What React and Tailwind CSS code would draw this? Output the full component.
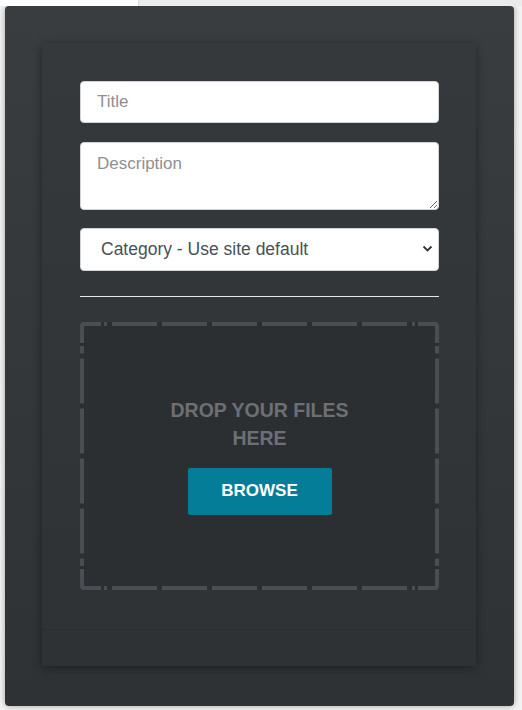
import { useState } from "react";

const W = 359;
const H = 268;

// dash pieces along one edge, centred, clipped short of the corners
function dashes(len) {
  const c = len / 2;
  const out = [];
  for (let k = 0; k < 10; k++) {
    const s = c + 2.5 + 50 * k;
    const e = s + 45;
    const cs = Math.max(s, 24);
    const ce = Math.min(e, len - 24);
    if (ce > cs) {
      out.push([cs, ce]);
      out.push([len - ce, len - cs]);
    }
  }
  return out;
}

function DashedFrame() {
  const corner = "M0 21V4a4 4 0 0 1 4-4h17v4H4v17z";
  return (
    <svg className="absolute inset-0 pointer-events-none" width={W} height={H} viewBox={`0 0 ${W} ${H}`}>
      <g fill="#494e52">
        {dashes(W).map(([s, e], i) => (
          <g key={"h" + i}>
            <rect x={s} y={0} width={e - s} height={4} />
            <rect x={s} y={H - 4} width={e - s} height={4} />
          </g>
        ))}
        {dashes(H).map(([s, e], i) => (
          <g key={"v" + i}>
            <rect x={0} y={s} width={4} height={e - s} />
            <rect x={W - 4} y={s} width={4} height={e - s} />
          </g>
        ))}
        <path d={corner} />
        <path d={corner} transform={`translate(${W} 0) scale(-1 1)`} />
        <path d={corner} transform={`translate(0 ${H}) scale(1 -1)`} />
        <path d={corner} transform={`translate(${W} ${H}) scale(-1 -1)`} />
      </g>
    </svg>
  );
}

export default function App() {
  const [category, setCategory] = useState("");

  return (
    <div className="min-h-screen bg-[#f3f3f3] font-['Liberation_Sans',Arial,sans-serif]">
      {/* strip of the page behind */}
      <div className="flex h-[6px]">
        <div className="w-[138px] bg-white" />
        <div className="flex-1 bg-[#ebebeb] border-l border-[#dcdcdc]" />
      </div>

      {/* modal */}
      <div className="ml-[5px] w-[509px] h-[700px] rounded-[4px] bg-gradient-to-b from-[#393d40] to-[#2f3235] shadow-[0_0_6px_rgba(0,0,0,0.35)] pt-[37px] pl-[37px]">
        <div className="w-[434px] h-[623px] rounded-[3px] bg-gradient-to-b from-[#35393c] to-[#2f3235] shadow-[0_2px_10px_rgba(0,0,0,0.4)] flex flex-col">
          <div className="h-[586px] pl-[38px] pr-[37px] pt-[38px] flex flex-col">
            <input
              type="text"
              placeholder="Title"
              className="h-[42px] w-full rounded-[4px] border border-[#ced4da] bg-white px-4 text-[17px] text-[#495057] placeholder:text-[#8f8f8f] outline-none"
            />
            <textarea
              placeholder="Description"
              className="mt-[19px] h-[68px] w-full rounded-[4px] border border-[#ced4da] bg-white px-4 pt-[8px] text-[17px] text-[#495057] placeholder:text-[#8f8f8f] outline-none"
            />
            <div className="relative mt-[18px]">
              <select
                value={category}
                onChange={(e) => setCategory(e.target.value)}
                className="h-[43px] w-full appearance-none rounded-[4px] border border-[#ced4da] bg-white pl-[20px] text-[17.5px] text-[#495057] outline-none"
              >
                <option value="">Category - Use site default</option>
                <option value="1">General</option>
              </select>
              <svg className="absolute right-[6px] top-[17px] pointer-events-none" width="11" height="8" viewBox="0 0 11 8">
                <path d="M1.5 1.5l4 4 4-4" fill="none" stroke="#333" strokeWidth="1.8" />
              </svg>
            </div>

            <div className="mt-[25px] h-px bg-[#e6e6e6]" />

            <div className="relative mt-[25px] h-[268px] w-[359px] rounded-[4px] bg-[#2c2f32] flex flex-col items-center justify-center">
              <DashedFrame />
              <p className="-mt-[2px] max-w-[200px] text-center text-[19.5px] leading-[28px] font-bold text-[#6c7075]">
                DROP YOUR FILES HERE
              </p>
              <button className="mt-[16px] h-[47px] w-[144px] rounded-[2px] bg-[#037d98] text-[17px] font-bold text-white">
                BROWSE
              </button>
            </div>
          </div>
          <div className="flex-1 border-t border-[#2a2d30]" />
        </div>
      </div>
    </div>
  );
}
